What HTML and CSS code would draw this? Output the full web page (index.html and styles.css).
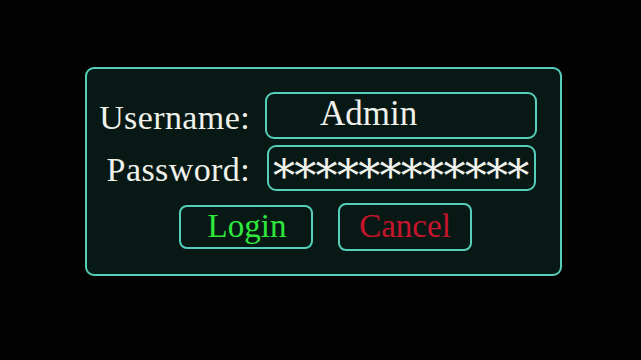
FILE: index.html
```html
<!DOCTYPE html>
<html>
<head>
<meta charset="utf-8">
<link rel="stylesheet" href="styles.css">
</head>
<body>
<div class="panel">
  <div class="row">
    <div class="label">Username:</div>
    <div class="field field-user">Admin</div>
  </div>
  <div class="row row-pass">
    <div class="label">Password:</div>
    <div class="field field-pass"><span class="stars">************</span></div>
  </div>
  <div class="actions">
    <div class="btn btn-login">Login</div>
    <div class="btn btn-cancel">Cancel</div>
  </div>
</div>
</body>
</html>
```
FILE: styles.css
```css
html, body {
  margin: 0;
  padding: 0;
  background: #020202;
  width: 641px;
  height: 360px;
  overflow: hidden;
}
body {
  font-family: "Liberation Serif", "Times New Roman", serif;
  color: #f0f1ea;
}
.panel {
  box-sizing: border-box;
  margin: 67px 0 0 85px;
  width: 477px;
  height: 209px;
  border: 2px solid #55cfba;
  border-radius: 9px;
  background: #071815;
  padding-top: 23px;
}
.row {
  display: flex;
  align-items: center;
  height: 47px;
}
.row-pass {
  margin-top: 6px;
  height: 46px;
}
.label {
  box-sizing: border-box;
  width: 163px;
  text-align: right;
  font-size: 34px;
  line-height: 1;
  padding-top: 4px;
  letter-spacing: 0.4px;
}
.field {
  box-sizing: border-box;
  border: 2px solid #55cfba;
  border-radius: 9px;
  height: 100%;
  display: flex;
  align-items: center;
}
.field-user {
  margin-left: 15px;
  width: 272px;
  padding-left: 53px;
  font-size: 35px;
  padding-bottom: 4px;
}
.field-pass {
  margin-left: 17px;
  width: 269px;
  padding-left: 4px;
}
.stars {
  font-family: "DejaVu Serif", serif;
  font-size: 44px;
  line-height: 1;
  letter-spacing: -0.7px;
  padding-top: 17px;
  white-space: nowrap;
}
.actions {
  display: flex;
  align-items: center;
  margin-top: 12px;
  padding-left: 92px;
  gap: 25px;
}
.btn {
  box-sizing: border-box;
  border: 2px solid #55cfba;
  border-radius: 8px;
  width: 134px;
  display: flex;
  align-items: center;
  justify-content: center;
  font-size: 33px;
  line-height: 1;
  padding-bottom: 2px;
}
.btn-login {
  height: 44px;
  color: #2ee83c;
  padding-left: 2px;
}
.btn-cancel {
  height: 48px;
  color: #c8142c;
}
```
